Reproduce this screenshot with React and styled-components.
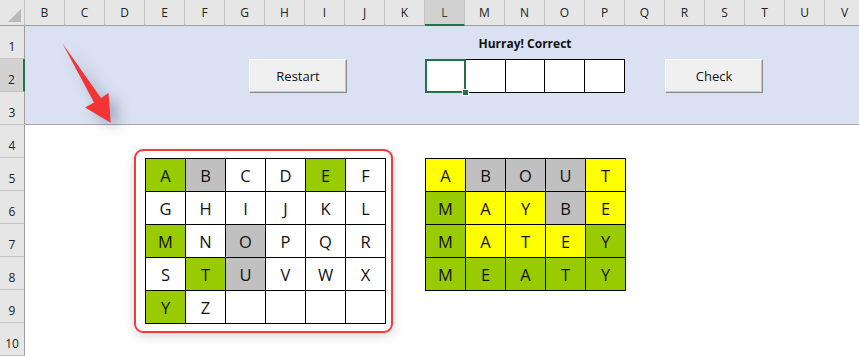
import styled, { createGlobalStyle } from 'styled-components'

const GlobalStyle = createGlobalStyle`
  body {
    margin: 0;
    background: #ffffff;
    overflow: hidden;
  }
`

const fills = { g: '#99cc00', s: '#c0c0c0', y: '#ffff00', w: '#ffffff' }

const cols = 'BCDEFGHIJKLMNOPQRSTUV'.split('')

const board = [
  [['A', 'g'], ['B', 's'], ['C', 'w'], ['D', 'w'], ['E', 'g'], ['F', 'w']],
  [['G', 'w'], ['H', 'w'], ['I', 'w'], ['J', 'w'], ['K', 'w'], ['L', 'w']],
  [['M', 'g'], ['N', 'w'], ['O', 's'], ['P', 'w'], ['Q', 'w'], ['R', 'w']],
  [['S', 'w'], ['T', 'g'], ['U', 's'], ['V', 'w'], ['W', 'w'], ['X', 'w']],
  [['Y', 'g'], ['Z', 'w'], ['', 'w'], ['', 'w'], ['', 'w'], ['', 'w']],
]

const guesses = [
  [['A', 'y'], ['B', 's'], ['O', 's'], ['U', 's'], ['T', 'y']],
  [['M', 'g'], ['A', 'y'], ['Y', 'y'], ['B', 's'], ['E', 'y']],
  [['M', 'g'], ['A', 'y'], ['T', 'y'], ['E', 'y'], ['Y', 'g']],
  [['M', 'g'], ['E', 'g'], ['A', 'g'], ['T', 'g'], ['Y', 'g']],
]

const Frame = styled.div`
  width: 859px;
  height: 356px;
  overflow: hidden;
`

const Sheet = styled.div`
  position: relative;
  display: grid;
  grid-template-columns: 25px repeat(21, 40px);
  grid-template-rows: 26px repeat(10, 33px);
  width: 865px;
  font-family: "Open Sans", "Noto Sans", sans-serif;
  color: #222;
`

const Corner = styled.div`
  grid-row: 1;
  grid-column: 1;
  background: #e6e6e6;
  border-right: 1px solid #c4c4c4;
  border-bottom: 1px solid #9e9e9e;
  box-sizing: border-box;
  display: flex;
  align-items: flex-end;
  justify-content: flex-end;
  padding: 0 3px 3px 0;

  &::after {
    content: '';
    width: 0;
    height: 0;
    border-left: 13px solid transparent;
    border-bottom: 13px solid #b9b9b9;
  }
`

const ColHead = styled.div`
  grid-row: 1;
  display: flex;
  align-items: center;
  justify-content: center;
  font-size: 12px;
  box-sizing: border-box;
  background: ${p => (p.$active ? '#d2d2d2' : '#e6e6e6')};
  border-right: 1px solid #c4c4c4;
  border-bottom: ${p => (p.$active ? '2px solid #217346' : '1px solid #9e9e9e')};
  color: ${p => (p.$active ? '#1f4d33' : '#222')};
`

const RowHead = styled.div`
  grid-column: 1;
  display: flex;
  align-items: flex-end;
  justify-content: center;
  padding-bottom: 3px;
  font-size: 12px;
  box-sizing: border-box;
  background: ${p => (p.$active ? '#d2d2d2' : '#e6e6e6')};
  border-bottom: 1px solid #c4c4c4;
  border-right: ${p => (p.$active ? '2px solid #217346' : '1px solid #9e9e9e')};
`

const Banner = styled.div`
  grid-column: 2 / -1;
  grid-row: 2 / 5;
  background: #d9e1f2;
  border-bottom: 1px solid #a6a6a6;
`

const Title = styled.div`
  grid-column: 12 / 17;
  grid-row: 2;
  display: flex;
  align-items: center;
  justify-content: center;
  font-size: 12px;
  font-weight: 700;
  color: #111;
  padding-top: 1px;
`

const GuessRow = styled.div`
  grid-column: 12 / 17;
  grid-row: 3;
  display: flex;
  align-self: start;
`

const GuessBox = styled.div`
  position: relative;
  width: 41px;
  height: 34px;
  box-sizing: border-box;
  background: #fff;
  border: 1px solid #000;
  margin-left: ${p => (p.$first ? '0' : '-1px')};

  ${p =>
    p.$selected &&
    `
    &::before {
      content: '';
      position: absolute;
      inset: -1px;
      border: 2px solid #217346;
      z-index: 1;
    }
    &::after {
      content: '';
      position: absolute;
      right: -4px;
      bottom: -4px;
      width: 5px;
      height: 5px;
      background: #217346;
      border: 1px solid #fff;
      z-index: 2;
    }
  `}
`

const Button = styled.button`
  grid-row: 3;
  grid-column: ${p => p.$cols};
  justify-self: start;
  align-self: center;
  margin-left: ${p => p.$offset}px;
  width: 98px;
  height: 34px;
  background: #f0f0f0;
  border: 1px solid;
  border-color: #fdfdfd #8a8a8a #8a8a8a #fdfdfd;
  box-shadow: inset -1px -1px 0 #c8c8c8;
  font-family: "Open Sans", "Noto Sans", sans-serif;
  font-size: 13px;
  color: #111;
  padding: 0;
`

const BoardWrap = styled.div`
  grid-column: 5 / 11;
  grid-row: 6 / 11;
  position: relative;

  &::before {
    content: '';
    position: absolute;
    left: -11px;
    top: -9px;
    right: -8px;
    bottom: -10px;
    border: 2px solid #f23a3a;
    border-radius: 9px;
    box-shadow: 0 3px 12px rgba(0, 0, 0, 0.16);
    pointer-events: none;
  }
`

const LetterGrid = styled.div`
  display: grid;
  grid-template-columns: repeat(${p => p.$cols}, 40px);
  grid-auto-rows: 33px;
  border-top: 1px solid #000;
  border-left: 1px solid #000;
  width: max-content;
  background: #fff;
`

const Cell = styled.div`
  display: flex;
  align-items: center;
  justify-content: center;
  box-sizing: border-box;
  border-right: 1px solid #000;
  border-bottom: 1px solid #000;
  background: ${p => fills[p.$fill]};
  font-size: 16.5px;
  color: #111;
  padding-top: 1px;
`

const GuessWrap = styled.div`
  grid-column: 12 / 17;
  grid-row: 6 / 10;
`

const ArrowLayer = styled.svg`
  position: absolute;
  left: 0;
  top: 0;
  pointer-events: none;
  filter: drop-shadow(7px 5px 7px rgba(40, 50, 80, 0.35));
`

const App = () => {
  return (
    <Frame>
      <GlobalStyle />
      <Sheet>
        <Corner />
        {cols.map((c, i) => (
          <ColHead key={c} $active={c === 'L'} style={{ gridColumn: i + 2 }}>
            {c}
          </ColHead>
        ))}
        {Array.from({ length: 10 }, (_, i) => (
          <RowHead key={i} $active={i === 1} style={{ gridRow: i + 2 }}>
            {i + 1}
          </RowHead>
        ))}
        <Banner />
        <Title>Hurray! Correct</Title>
        <Button $cols="7 / 11" $offset={24}>Restart</Button>
        <GuessRow>
          {[0, 1, 2, 3, 4].map(i => (
            <GuessBox key={i} $first={i === 0} $selected={i === 0} />
          ))}
        </GuessRow>
        <Button $cols="18 / 21" $offset={0}>Check</Button>

        <BoardWrap>
          <LetterGrid $cols={6}>
            {board.flat().map(([ch, f], i) => (
              <Cell key={i} $fill={f}>{ch}</Cell>
            ))}
          </LetterGrid>
        </BoardWrap>

        <GuessWrap>
          <LetterGrid $cols={5}>
            {guesses.flat().map(([ch, f], i) => (
              <Cell key={i} $fill={f}>{ch}</Cell>
            ))}
          </LetterGrid>
        </GuessWrap>

        <ArrowLayer width="140" height="140" viewBox="0 0 140 140">
          <polygon
            points="62.5,43.5 101,98 108.5,93 110.7,122.7 85,107.5 94,102.5"
            fill="#f33434"
          />
        </ArrowLayer>
      </Sheet>
    </Frame>
  )
}

export default App
